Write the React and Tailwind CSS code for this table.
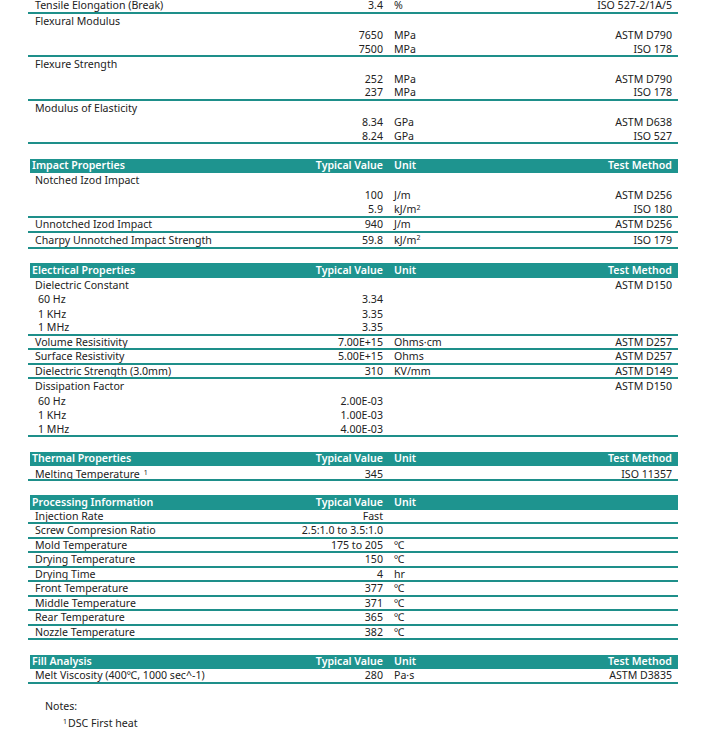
import React from 'react';

// Datasheet tables — rows are 14.5px on a fixed grid, groups end with a teal rule
const TEAL = 'bg-[#1e948f]';

const sections = [
  {
    title: null,
    groups: [
      { rows: [{ label: 'Tensile Elongation (Break)', value: '3.4', unit: '%', method: 'ISO 527-2/1A/5' }] },
      {
        rows: [
          { label: 'Flexural Modulus' },
          { value: '7650', unit: 'MPa', method: 'ASTM D790' },
          { value: '7500', unit: 'MPa', method: 'ISO 178' },
        ],
      },
      {
        rows: [
          { label: 'Flexure Strength' },
          { value: '252', unit: 'MPa', method: 'ASTM D790' },
          { value: '237', unit: 'MPa', method: 'ISO 178' },
        ],
      },
      {
        rows: [
          { label: 'Modulus of Elasticity' },
          { value: '8.34', unit: 'GPa', method: 'ASTM D638' },
          { value: '8.24', unit: 'GPa', method: 'ISO 527' },
        ],
      },
    ],
  },
  {
    title: 'Impact Properties',
    method: true,
    groups: [
      {
        rows: [
          { label: 'Notched Izod Impact' },
          { value: '100', unit: 'J/m', method: 'ASTM D256' },
          { value: '5.9', unit: 'kJ/m', sup: '2', method: 'ISO 180', tall: true },
        ],
      },
      { rows: [{ label: 'Unnotched Izod Impact', value: '940', unit: 'J/m', method: 'ASTM D256' }] },
      { rows: [{ label: 'Charpy Unnotched Impact Strength', value: '59.8', unit: 'kJ/m', sup: '2', method: 'ISO 179', tall: true }] },
    ],
  },
  {
    title: 'Electrical Properties',
    method: true,
    groups: [
      {
        rows: [
          { label: 'Dielectric Constant', method: 'ASTM D150' },
          { sub: '60 Hz', value: '3.34' },
          { sub: '1 KHz', value: '3.35' },
          { sub: '1 MHz', value: '3.35' },
        ],
      },
      { rows: [{ label: 'Volume Resisitivity', value: '7.00E+15', unit: 'Ohms·cm', method: 'ASTM D257' }] },
      { rows: [{ label: 'Surface Resistivity', value: '5.00E+15', unit: 'Ohms', method: 'ASTM D257' }] },
      { rows: [{ label: 'Dielectric Strength (3.0mm)', value: '310', unit: 'KV/mm', method: 'ASTM D149' }] },
      {
        rows: [
          { label: 'Dissipation Factor', method: 'ASTM D150' },
          { sub: '60 Hz', value: '2.00E-03' },
          { sub: '1 KHz', value: '1.00E-03' },
          { sub: '1 MHz', value: '4.00E-03' },
        ],
      },
    ],
  },
  {
    title: 'Thermal Properties',
    method: true,
    groups: [{ rows: [{ label: 'Melting Temperature', note: '1', value: '345', method: 'ISO 11357', low: true }] }],
  },
  {
    title: 'Processing Information',
    method: false,
    groups: [
      ['Injection Rate', 'Fast', ''],
      ['Screw Compresion Ratio', '2.5:1.0 to 3.5:1.0', ''],
      ['Mold Temperature', '175 to 205', '℃'],
      ['Drying Temperature', '150', '℃'],
      ['Drying Time', '4', 'hr'],
      ['Front Temperature', '377', '℃'],
      ['Middle Temperature', '371', '℃'],
      ['Rear Temperature', '365', '℃'],
      ['Nozzle Temperature', '382', '℃'],
    ].map(([label, value, unit]) => ({ rows: [{ label, value, unit }] })),
  },
  {
    title: 'Fill Analysis',
    method: true,
    groups: [{ rows: [{ label: 'Melt Viscosity (400℃, 1000 sec^-1)', value: '280', unit: 'Pa·s', method: 'ASTM D3835' }] }],
  },
];

function Header({ title, method }) {
  return (
    <div className={`ml-[2px] flex h-[14.5px] items-center ${TEAL} font-semibold text-white`}>
      <div className="w-[270px] shrink-0 pl-[2px]">{title}</div>
      <div className="flex w-[83px] shrink-0 justify-end whitespace-nowrap">Typical Value</div>
      <div className="w-[111px] shrink-0 pl-[11px]">Unit</div>
      <div className="flex-1 pr-[6px] text-right">{method ? 'Test Method' : ''}</div>
    </div>
  );
}

function Row({ row, last }) {
  const h = row.tall ? 'h-[16px]' : 'h-[14.5px]';
  const line = last ? 'border-b-2 border-[#1e8f8a]' : '';
  const shift = row.low ? 'mt-[3px]' : '';
  return (
    <div className={`flex ${h} items-center overflow-hidden pt-[1px] ${line}`}>
      <div className={`w-[272px] shrink-0 whitespace-nowrap ${row.sub ? 'pl-[10px]' : 'pl-[7px]'} ${row.low ? 'mt-[4px]' : ''}`}>
        {row.label || row.sub || ''}
        {row.note && <sup className="ml-[4px] text-[7px]">{row.note}</sup>}
      </div>
      <div className={`flex w-[83px] shrink-0 justify-end whitespace-nowrap ${shift}`}>{row.value || ''}</div>
      <div className="w-[111px] shrink-0 whitespace-nowrap pl-[11px]">
        {row.unit || ''}
        {row.sup && <sup className="text-[7px]">{row.sup}</sup>}
      </div>
      <div className={`flex-1 whitespace-nowrap pr-[6px] text-right ${shift}`}>{row.method || ''}</div>
    </div>
  );
}

export default function App() {
  return (
    <div
      className="min-h-[746px] w-[706px] bg-white text-[10.6px] leading-none text-[#222]"
      style={{ fontFamily: '"Noto Sans", "Noto Sans CJK SC", sans-serif' }}
    >
      <div className="-mt-[1px] ml-[28px] flex w-[650px] flex-col gap-[14.5px]">
        {sections.map((section, i) => (
          <div key={i}>
            {section.title && <Header title={section.title} method={section.method} />}
            {section.groups.map((group, g) =>
              group.rows.map((row, r) => (
                <Row key={`${g}-${r}`} row={row} last={r === group.rows.length - 1} />
              ))
            )}
          </div>
        ))}
      </div>

      {/* Notes */}
      <div className="ml-[45px] mt-[17px] flex flex-col gap-[7px]">
        <div>Notes:</div>
        <div className="pl-[18px]">
          <sup className="mr-[1px] text-[7px]">1</sup>DSC First heat
        </div>
      </div>
    </div>
  );
}
